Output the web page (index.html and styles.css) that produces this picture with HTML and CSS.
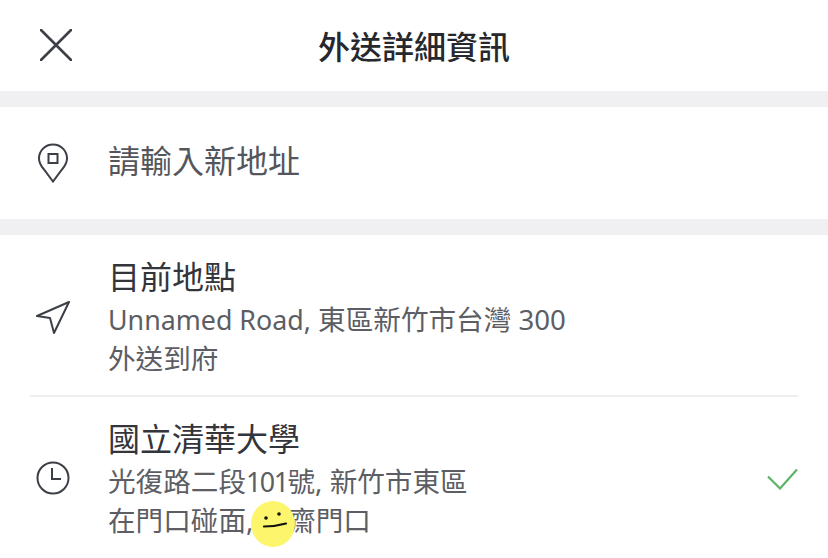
FILE: index.html
```html
<!DOCTYPE html>
<html lang="zh-TW">
<head>
    <meta charset="UTF-8">
    <meta name="viewport" content="width=device-width, initial-scale=1.0">
    <title>外送詳細資訊</title>
    <link rel="stylesheet" href="styles.css">
</head>
<body>
    <div class="screen">
        <header class="topbar">
            <svg class="close-icon" width="32" height="32" viewBox="0 0 32 32">
                <path d="M1 1L31 31M31 1L1 31" fill="none" stroke="#3c3f46" stroke-width="2.6" stroke-linecap="round"/>
            </svg>
            <h1 class="title">外送詳細資訊</h1>
        </header>
        <div class="band"></div>
        <section class="search-row">
            <div class="icon-slot">
                <svg width="32" height="40" viewBox="0 0 32 40">
                    <path d="M16 1.500C8 1.500 2 7.800 2 15.500c0 4.500 2 7.500 5 11L16 38.500l9-12c3-3.500 5-6.500 5-11C30 7.800 24 1.500 16 1.500z" fill="none" stroke="#3c3f46" stroke-width="2"/>
                    <rect x="11.500" y="11" width="9" height="9" fill="none" stroke="#3c3f46" stroke-width="2"/>
                </svg>
            </div>
            <div class="search-text">請輸入新地址</div>
        </section>
        <div class="band"></div>
        <section class="place current">
            <div class="icon-slot">
                <svg width="36" height="38" viewBox="0 0 36 38">
                    <path d="M34 6L2 20 15 22 19 37z" fill="none" stroke="#3c3f46" stroke-width="2" stroke-linejoin="round"/>
                </svg>
            </div>
            <div class="place-text">
                <div class="place-name">目前地點</div>
                <div class="place-line"><span class="latin">Unnamed Road,</span> 東區新竹市台灣 300</div>
                <div class="place-line">外送到府</div>
            </div>
        </section>
        <section class="place selected">
            <div class="icon-slot">
                <svg width="34" height="34" viewBox="0 0 34 34">
                    <circle cx="17" cy="17" r="15.500" fill="none" stroke="#3c3f46" stroke-width="2"/>
                    <path d="M16 7V18H25" fill="none" stroke="#3c3f46" stroke-width="2"/>
                </svg>
            </div>
            <div class="place-text">
                <div class="place-name">國立清華大學</div>
                <div class="place-line">光復路二段<span class="latin tight">101</span>號, 新竹市東區</div>
                <div class="place-line">在門口碰面, 請齋門口</div>
            </div>
            <svg class="check-icon" width="32" height="24" viewBox="0 0 32 24">
                <path d="M2 10.500L14 22.500 31 3.500" fill="none" stroke="#5cb467" stroke-width="2.200"/>
            </svg>
        </section>
        <div class="sticker">
            <svg width="44" height="46" viewBox="0 0 44 46">
                <circle cx="15" cy="17" r="1.800" fill="#111"/>
                <circle cx="28" cy="13" r="1.800" fill="#111"/>
                <path d="M13 25.500C20 25.500 28 24.500 35 22.500" fill="none" stroke="#111" stroke-width="2.200" stroke-linecap="round"/>
            </svg>
        </div>
    </div>
</body>
</html>
```

FILE: styles.css
```css
html, body {
    margin: 0;
    padding: 0;
    background: #fff;
}
.screen {
    position: relative;
    width: 828px;
    height: 558px;
    overflow: hidden;
    font-family: "Noto Sans", "Noto Sans CJK TC", sans-serif;
    color: #3c3f46;
}
.topbar {
    display: flex;
    align-items: center;
    justify-content: center;
    position: relative;
    height: 91px;
}
.close-icon {
    position: absolute;
    left: 40px;
    top: 29px;
}
.title {
    margin: 0 0 2px;
    font-size: 32px;
    font-weight: 500;
    color: #26282d;
}
.band {
    height: 16px;
    background: #f0f0f3;
}
.icon-slot {
    flex: none;
    display: flex;
    justify-content: center;
    width: 46px;
    margin-right: 32px;
}
.search-row {
    display: flex;
    align-items: center;
    height: 112px;
    padding-left: 30px;
}
.search-text {
    font-size: 32px;
    line-height: 40px;
    margin-bottom: 4px;
    color: #54565c;
}
.place {
    display: flex;
    align-items: center;
    margin: 0 30px;
    height: 161px;
}
.place.current {
    border-bottom: 2px solid #eeeeef;
    box-sizing: border-box;
    height: 162px;
}
.place-text {
    flex: 1;
    padding-top: 2px;
}
.place-name {
    font-size: 32px;
    line-height: 42px;
    margin-bottom: 2px;
    color: #33353b;
}
.place-line {
    font-size: 27.600px;
    line-height: 38px;
    color: #5c5e64;
}
.latin {
    font-size: 26.800px;
}
.tight {
    letter-spacing: -1.500px;
}
.sticker {
    position: absolute;
    left: 251px;
    top: 501px;
    width: 44px;
    height: 46px;
    border-radius: 50%;
    background: #fdf56c;
}
```
